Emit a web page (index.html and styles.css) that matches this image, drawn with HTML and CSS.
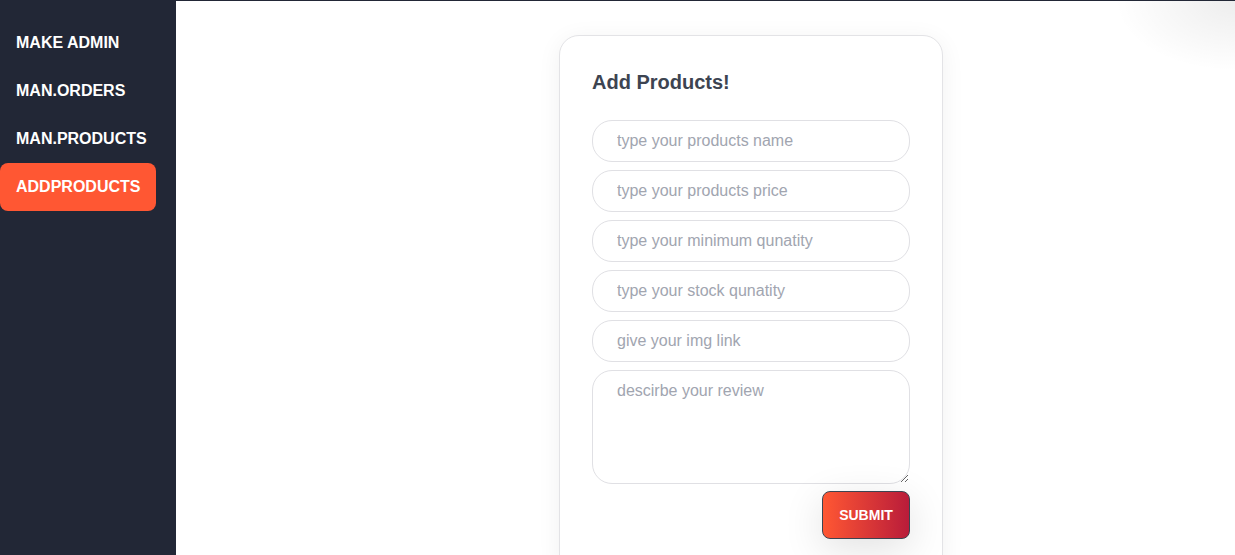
FILE: index.html
```html
<!DOCTYPE html>
<html>
<head>
<meta charset="utf-8">
<link rel="stylesheet" href="styles.css">
</head>
<body>
<div class="layout">
  <aside class="sidebar">
    <ul class="menu">
      <li class="menu-item">MAKE ADMIN</li>
      <li class="menu-item">MAN.ORDERS</li>
      <li class="menu-item">MAN.PRODUCTS</li>
      <li class="menu-item active">ADDPRODUCTS</li>
    </ul>
  </aside>
  <main class="main">
    <div class="card">
      <h2 class="title">Add Products!</h2>
      <form class="form">
        <input class="field" type="text" placeholder="type your products name">
        <input class="field" type="text" placeholder="type your products price">
        <input class="field" type="text" placeholder="type your minimum qunatity">
        <input class="field" type="text" placeholder="type your stock qunatity">
        <input class="field" type="text" placeholder="give your img link">
        <textarea class="field area" placeholder="descirbe your review"></textarea>
        <div class="actions">
          <button class="submit" type="button">SUBMIT</button>
        </div>
      </form>
    </div>
  </main>
  <div class="corner-glow"></div>
</div>
</body>
</html>
```

FILE: styles.css
```css
* { box-sizing: border-box; }
html, body { height: 100%; }
body {
  margin: 0;
  border-top: 1px solid #222736;
  font-family: "Liberation Sans", Arial, sans-serif;
  background: #ffffff;
  overflow: hidden;
}
.layout {
  display: flex;
  height: 554px;
  position: relative;
}
.sidebar {
  width: 176px;
  flex-shrink: 0;
  background: #222736;
  padding-top: 18px;
}
.menu {
  list-style: none;
  margin: 0;
  padding: 0 20px 0 0;
}
.menu-item {
  height: 48px;
  line-height: 48px;
  padding-left: 16px;
  color: #ffffff;
  font-weight: bold;
  font-size: 16px;
  border-radius: 0 8px 8px 0;
}
.menu-item.active {
  background: #ff5733;
  border-radius: 8px;
}
.main {
  flex: 1;
  padding-left: 383px;
  padding-top: 34px;
}
.card {
  width: 384px;
  height: 540px;
  border: 1px solid #e3e3e6;
  border-radius: 20px;
  background: #fff;
  padding: 32px 32px;
  box-shadow: 0 4px 24px rgba(0,0,0,0.06);
}
.title {
  margin: 0 0 24px 0;
  font-size: 20px;
  line-height: 28px;
  font-weight: bold;
  color: #3d4451;
}
.form {
  display: flex;
  flex-direction: column;
  gap: 8px;
}
.field {
  width: 318px;
  height: 42px;
  border: 1px solid #e0e0e4;
  border-radius: 20px;
  padding: 0 24px;
  font-family: "Liberation Sans", Arial, sans-serif;
  font-size: 16px;
  color: #3d4451;
  background: #fff;
  outline: none;
}
.field::placeholder { color: #a1a5b0; }
.area {
  height: 114px;
  padding: 8px 24px;
  line-height: 24px;
  resize: vertical;
}
.actions {
  display: flex;
  justify-content: flex-end;
  margin-top: -1px;
}
.submit {
  width: 88px;
  height: 48px;
  border: 1px solid #3d4451;
  border-radius: 8px;
  background: linear-gradient(90deg, #ff5733, #b91c3a);
  color: #fff;
  font-family: "Liberation Sans", Arial, sans-serif;
  font-weight: bold;
  font-size: 14px;
  box-shadow: 0 10px 40px rgba(0,0,0,0.12);
}
.corner-glow {
  position: absolute;
  right: 0;
  top: 0;
  width: 150px;
  height: 80px;
  background: radial-gradient(ellipse 120px 70px at 100% 0%, rgba(0,0,0,0.07), rgba(0,0,0,0) 100%);
  pointer-events: none;
}
```
